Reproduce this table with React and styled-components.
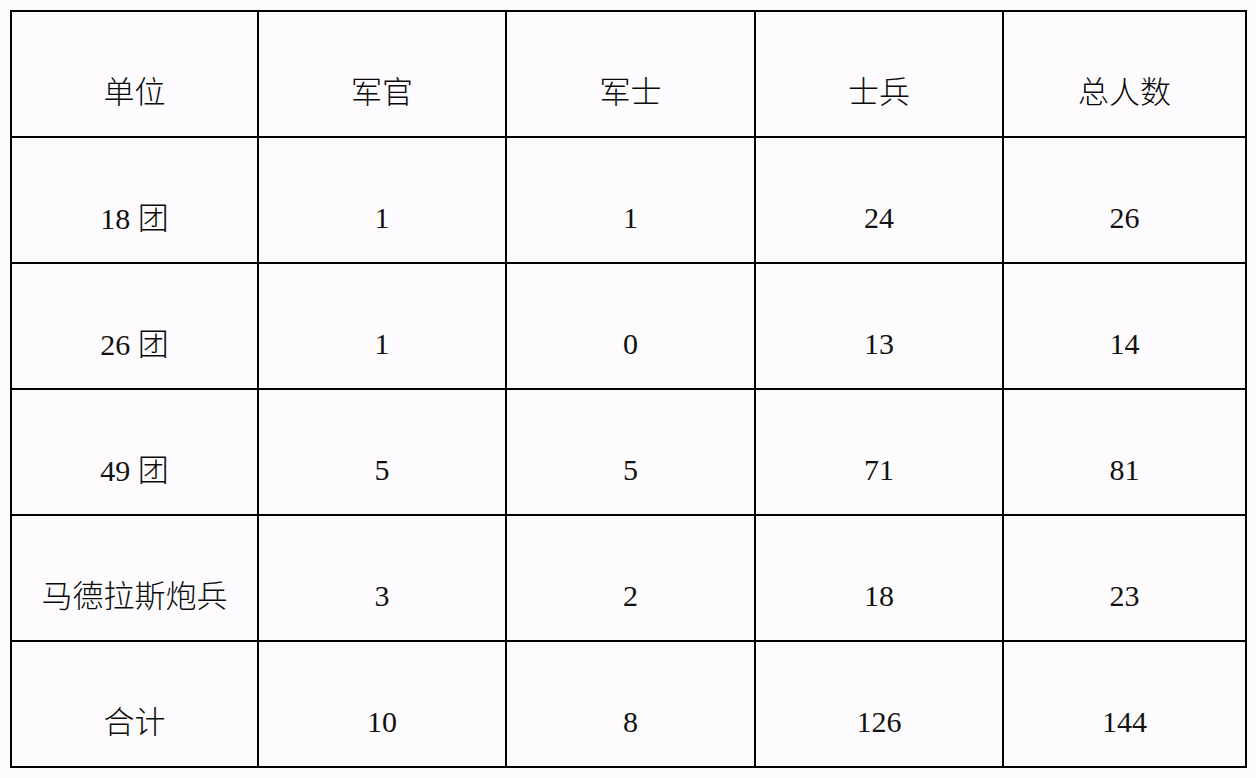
import React from "react";
import styled, { createGlobalStyle } from "styled-components";

const GlobalStyle = createGlobalStyle`
  html, body {
    margin: 0;
    padding: 0;
    background: #fdfbfd;
  }
  body {
    font-family: "Liberation Serif", "Noto Sans CJK SC", serif;
  }
`;

const Page = styled.div`
  width: 1256px;
  height: 778px;
  padding: 10px 0 0 10px;
  box-sizing: border-box;
  background: #fdfbfd;
`;

const Table = styled.table`
  border-collapse: collapse;
  table-layout: fixed;
  width: 1235px;
`;

const Col = styled.col`
  width: ${(p) => p.$w}px;
`;

const Row = styled.tr`
  height: 126px;
`;

const Cell = styled.td`
  border: 2px solid #000;
  padding: 35px 0 0 0;
  text-align: center;
  vertical-align: middle;
  font-family: "Liberation Serif", "Noto Sans CJK SC", serif;
  font-size: 30px;
  line-height: 36px;
  color: #111;
  white-space: nowrap;
`;

const Han = styled.span`
  font-family: "Noto Sans CJK SC", sans-serif;
  font-size: 31px;
  font-weight: 300;
  color: #0a0a0a;
`;

const headers = ["单位", "军官", "军士", "士兵", "总人数"];
const rows = [
  ["18 团", "1", "1", "24", "26"],
  ["26 团", "1", "0", "13", "14"],
  ["49 团", "5", "5", "71", "81"],
  ["马德拉斯炮兵", "3", "2", "18", "23"],
  ["合计", "10", "8", "126", "144"],
];
const widths = [247, 248, 249, 248, 243];

function Text({ value }) {
  const parts = value.split(/([\u4e00-\u9fff]+)/).filter(Boolean);
  return parts.map((p, i) =>
    /[\u4e00-\u9fff]/.test(p) ? <Han key={i}>{p}</Han> : <span key={i}>{p}</span>
  );
}

export default function App() {
  return (
    <>
      <GlobalStyle />
      <Page>
        <Table>
          <colgroup>
            {widths.map((w, i) => (
              <Col key={i} $w={w} />
            ))}
          </colgroup>
          <tbody>
            <Row>
              {headers.map((h) => (
                <Cell key={h}>
                  <Text value={h} />
                </Cell>
              ))}
            </Row>
            {rows.map((r, i) => (
              <Row key={i}>
                {r.map((c, j) => (
                  <Cell key={j}>
                    <Text value={c} />
                  </Cell>
                ))}
              </Row>
            ))}
          </tbody>
        </Table>
      </Page>
    </>
  );
}
